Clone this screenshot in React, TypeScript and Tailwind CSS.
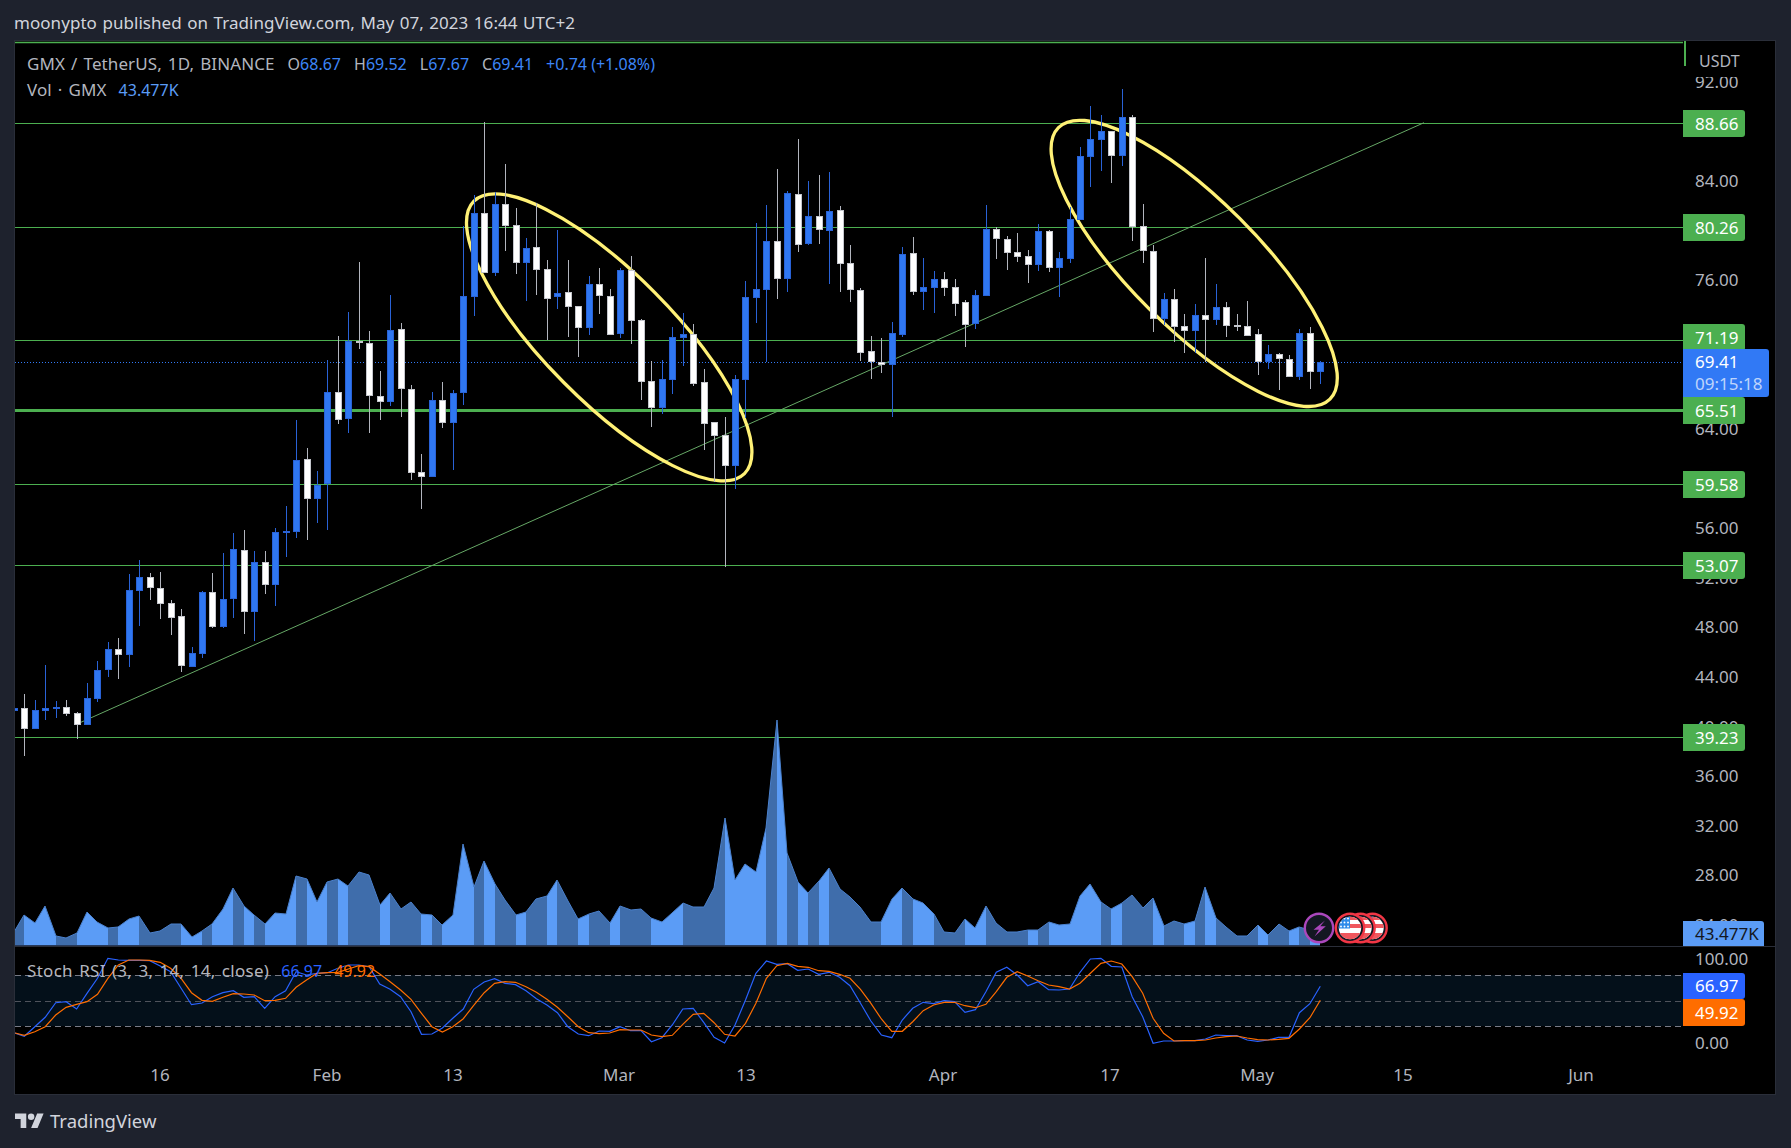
const BLUE = '#2f77f2';
const GREEN = '#4caf50';

// [blue?, bodyTop, bodyBottom, wickTop, wickBottom], y in page pixels, first candle is index -1
const candles: number[][] = [
  [1, 708, 711, 708, 711], [0, 708, 729, 694, 756], [1, 710, 729, 700, 729], [1, 708, 711, 665, 720], [1, 707, 708, 701, 718],
  [0, 707, 714, 700, 716], [0, 713, 725, 712, 739], [1, 698, 725, 683, 725], [1, 670, 699, 661, 702], [1, 649, 670, 642, 677],
  [0, 649, 655, 638, 679], [1, 590, 655, 574, 667], [1, 577, 591, 560, 626], [0, 577, 588, 573, 600], [0, 588, 604, 572, 619],
  [0, 603, 618, 600, 635], [0, 616, 666, 609, 672], [1, 653, 667, 647, 667], [1, 592, 654, 591, 658], [0, 592, 627, 573, 628],
  [1, 599, 627, 553, 628], [1, 549, 599, 533, 618], [0, 550, 612, 530, 634], [1, 562, 612, 551, 641], [0, 562, 585, 551, 594],
  [1, 532, 585, 528, 606], [1, 531, 532, 506, 557], [1, 460, 532, 420, 538], [0, 459, 499, 448, 540], [1, 485, 499, 471, 523],
  [1, 392, 484, 360, 530], [0, 392, 420, 336, 424], [1, 341, 419, 312, 433], [0, 341, 343, 262, 349], [0, 343, 396, 331, 433],
  [0, 396, 402, 371, 420], [1, 330, 402, 295, 406], [0, 329, 389, 323, 417], [0, 389, 473, 385, 480], [0, 472, 477, 454, 509],
  [1, 400, 477, 392, 477], [0, 400, 423, 382, 428], [1, 393, 423, 390, 470], [1, 296, 393, 226, 405], [1, 213, 297, 195, 316],
  [0, 213, 273, 122, 273], [1, 204, 273, 192, 276], [0, 204, 226, 164, 251], [0, 225, 263, 208, 274], [1, 248, 263, 238, 301],
  [0, 247, 270, 203, 295], [0, 269, 299, 260, 340], [1, 293, 297, 230, 309], [0, 292, 307, 260, 337], [0, 306, 328, 306, 357],
  [1, 284, 328, 276, 335], [0, 284, 296, 268, 314], [0, 296, 335, 289, 335], [1, 270, 334, 268, 338], [0, 270, 321, 256, 344],
  [0, 320, 382, 319, 400], [0, 381, 408, 361, 427], [1, 379, 408, 360, 414], [1, 337, 380, 327, 394], [1, 334, 338, 313, 366],
  [0, 334, 384, 324, 386], [0, 382, 424, 369, 450], [0, 422, 436, 422, 482], [0, 435, 466, 417, 567], [1, 379, 466, 375, 489],
  [1, 297, 380, 281, 418], [1, 289, 298, 223, 323], [1, 241, 290, 205, 362], [0, 241, 279, 169, 299], [1, 193, 279, 191, 292],
  [0, 194, 245, 139, 252], [1, 216, 244, 181, 245], [0, 216, 230, 175, 244], [1, 211, 231, 172, 284], [0, 210, 264, 206, 292],
  [0, 263, 290, 245, 302], [0, 290, 353, 288, 361], [0, 351, 362, 336, 379], [0, 362, 365, 338, 373], [1, 333, 365, 322, 417],
  [1, 254, 335, 247, 337], [0, 253, 292, 237, 295], [1, 287, 292, 258, 310], [1, 279, 288, 271, 313], [0, 279, 288, 272, 296],
  [0, 287, 304, 279, 316], [0, 302, 325, 300, 347], [1, 295, 324, 290, 329], [1, 229, 296, 205, 296], [0, 229, 239, 227, 259],
  [0, 239, 253, 236, 270], [0, 252, 257, 233, 262], [0, 256, 265, 250, 283], [1, 231, 265, 224, 271], [0, 231, 268, 230, 272],
  [1, 258, 268, 252, 297], [1, 219, 259, 207, 263], [1, 156, 220, 147, 220], [1, 139, 157, 106, 187], [1, 131, 140, 115, 171],
  [0, 131, 156, 131, 183], [1, 117, 156, 89, 166], [0, 117, 227, 115, 241], [0, 226, 251, 204, 263], [0, 251, 319, 245, 332],
  [1, 299, 319, 293, 325], [0, 299, 327, 289, 342], [0, 326, 331, 314, 353], [1, 315, 331, 304, 353], [0, 315, 320, 258, 362],
  [1, 307, 320, 284, 325], [0, 307, 326, 302, 337], [0, 325, 327, 314, 331], [0, 326, 336, 301, 336], [0, 334, 362, 329, 375],
  [1, 354, 362, 345, 369], [0, 354, 359, 353, 390], [0, 359, 377, 355, 377], [1, 333, 377, 329, 380], [0, 333, 372, 327, 389],
  [1, 362, 372, 361, 384],
];

// top edge of the volume area per candle, starts at index -1 as well
const volume = [
  932, 915, 923, 906, 936, 938, 933, 912, 922, 928, 927, 919, 916, 933, 931, 924, 924, 937, 931, 924,
  909, 888, 906, 915, 924, 913, 914, 876, 879, 902, 882, 879, 886, 872, 875, 905, 893, 909, 902, 914,
  915, 925, 915, 844, 887, 861, 884, 900, 915, 912, 899, 896, 880, 901, 919, 914, 911, 923, 906, 910,
  909, 918, 922, 913, 903, 907, 907, 888, 818, 880, 864, 872, 828, 720, 853, 882, 893, 881, 868, 889,
  897, 907, 922, 922, 899, 888, 899, 903, 914, 932, 933, 919, 928, 906, 923, 932, 932, 930, 930, 922,
  925, 924, 896, 884, 902, 909, 903, 895, 908, 898, 926, 921, 924, 921, 887, 918, 927, 936, 936, 925,
  935, 924, 931, 927, 930, 942,
];

// stoch rsi in thirds of a pixel below y=900, index 0 onward
const rsiK = [
  409, 380, 352, 308, 305, 327, 280, 235, 175, 180, 181, 181, 182, 198, 215, 265, 314, 309, 290, 278,
  272, 292, 290, 325, 290, 272, 215, 225, 220, 218, 205, 195, 195, 200, 252, 268, 290, 335, 403, 402,
  384, 355, 327, 268, 246, 236, 250, 254, 272, 296, 315, 338, 380, 402,
  407, 393, 394, 380, 392, 392, 425, 413, 375, 327, 325, 367, 412, 429, 375, 300, 220, 183, 193, 191,
  211, 207, 223, 217, 232, 257, 310, 363, 405, 413, 360, 325, 307, 311, 302, 305, 337, 329, 275, 217,
  202, 225, 257, 245, 269, 270, 267, 217, 177, 175, 199, 201, 290, 350, 430, 423, 423, 422, 422, 417,
  405, 407, 407, 420, 424, 420, 412, 412, 338, 311, 259,
];
const rsiD = [
  406, 395, 380, 345, 322, 313, 305, 283, 235, 195, 180, 180, 181, 187, 205, 235, 278, 301, 304, 292,
  281, 282, 285, 302, 301, 295, 262, 240, 220, 218, 217, 207, 197, 200, 222, 245, 270, 298, 340, 380,
  396, 380, 356, 316, 278, 250, 245, 247, 260, 277, 298, 322, 350, 380,
  398, 401, 399, 389, 390, 390, 405, 410, 406, 373, 343, 340, 368, 403, 408, 370, 310, 235, 197, 190,
  199, 202, 212, 214, 223, 235, 268, 310, 357, 394, 394, 365, 332, 315, 307, 307, 317, 323, 313, 275,
  232, 215, 228, 242, 255, 260, 267, 250, 220, 190, 183, 192, 230, 280, 355, 400, 423, 422, 422, 420,
  414, 410, 408, 414, 419, 420, 418, 415, 387, 353, 301,
];

// y is the line, top is where the badge sits (71.19 gets pushed up by the last price label)
const levels = [
  { label: '88.66', y: 123, top: 110 }, { label: '80.26', y: 227, top: 214 }, { label: '71.19', y: 340, top: 324 },
  { label: '65.51', y: 410, top: 397, thick: true }, { label: '59.58', y: 484, top: 471 }, { label: '53.07', y: 565, top: 552 },
  { label: '39.23', y: 737, top: 724 },
];
const priceTicks = [92, 88, 84, 76, 72, 64, 56, 52, 48, 44, 40, 36, 32, 28, 24];
const timeTicks = [
  { label: '16', x: 160 }, { label: 'Feb', x: 327 }, { label: '13', x: 453 }, { label: 'Mar', x: 619 }, { label: '13', x: 746 },
  { label: 'Apr', x: 943 }, { label: '17', x: 1110 }, { label: 'May', x: 1257 }, { label: '15', x: 1403 }, { label: 'Jun', x: 1581 },
];

const xAt = (i: number) => 24.3 + 10.452 * i;
const rsiPoints = (vals: number[]) => vals.map((v, i) => `${xAt(i).toFixed(1)},${(900 + v / 3).toFixed(1)}`).join(' ');

function FlagBadge({ cx, id }: { cx: number; id: string }) {
  const cy = 928;
  return (
    <g>
      <clipPath id={id}><circle cx={cx} cy={cy} r={11.2} /></clipPath>
      <circle cx={cx} cy={cy} r={14.2} fill="#131722" stroke="#f23645" strokeWidth={2.4} />
      <g clipPath={`url(#${id})`}>
        <rect x={cx - 12} y={cy - 12} width={24} height={24} fill="#fff" />
        <rect x={cx - 12} y={cy - 12} width={24} height={4} fill="#f0575d" />
        <rect x={cx - 12} y={cy - 4} width={24} height={4} fill="#f0575d" />
        <rect x={cx - 12} y={cy + 5} width={24} height={7} fill="#f0575d" />
        <rect x={cx - 12} y={cy - 12} width={12} height={12.5} fill="#2f8bea" />
        {[-9.5, -5.5, -1.5].map((dy) => [-9, -5.5, -2].map((dx) => (
          <circle key={`${dx}${dy}`} cx={cx + dx} cy={cy + dy} r={0.95} fill="#fff" />
        )))}
      </g>
    </g>
  );
}

function MainPane() {
  return (
    <svg className="block" width={1668} height={905} viewBox="15 41 1668 905">
      <line x1={15} x2={1683} y1={42.5} y2={42.5} stroke={GREEN} strokeWidth={1.4} />
      {levels.map((l) => (
        <line key={l.y} x1={15} x2={1683} y1={l.y + 0.5} y2={l.y + 0.5} stroke={GREEN} strokeWidth={l.thick ? 3 : 1} />
      ))}
      <line x1={15} x2={1681} y1={362.5} y2={362.5} stroke="#3179f5" strokeWidth={1} strokeDasharray="1 2" />
      <line x1={80} y1={722.7} x2={1424} y2={122.7} stroke="#66a866" strokeWidth={1} />

      <ellipse cx={609.2} cy={337.4} rx={192} ry={64} transform="rotate(45.2 609.2 337.4)" fill="none" stroke="#fff176" strokeWidth={3.3} />
      <ellipse cx={1194.2} cy={263.4} rx={192} ry={64} transform="rotate(45 1194.2 263.4)" fill="none" stroke="#fff176" strokeWidth={3.3} />

      {volume.map((y, n) => {
        if (n === 0) return null;
        const x1 = Math.round(xAt(n - 2));
        const x2 = Math.round(xAt(n - 1));
        const blue = candles[n][0] === 1;
        return (
          <polygon
            key={n}
            points={`${x1},945 ${x1},${volume[n - 1]} ${x2},${y} ${x2},945`}
            fill={blue ? '#5b9cf6' : '#3f6dab'}
          />
        );
      })}
      <polyline
        points={volume.map((y, n) => `${Math.round(xAt(n - 1))},${y}`).join(' ')}
        fill="none"
        stroke="#4a80cc"
        strokeWidth={1}
      />
      <rect x={15} y={945} width={1305} height={1} fill="#26395a" />

      {candles.map(([blue, top, bottom, wickTop, wickBottom], n) => {
        const cx = Math.round(xAt(n - 1));
        return (
          <g key={n}>
            <rect x={cx} y={wickTop} width={1} height={wickBottom - wickTop} fill={blue ? '#2962d6' : '#b2b5be'} />
            <rect
              x={cx - 2.5}
              y={top + 0.5}
              width={6}
              height={Math.max(bottom - top - 1, 1)}
              fill={blue ? BLUE : '#ffffff'}
              stroke={blue ? '#2962d6' : '#c4c6cc'}
              strokeWidth={1}
            />
          </g>
        );
      })}

      <circle cx={1319} cy={928} r={14.2} fill="#131722" stroke="#ab47bc" strokeWidth={2.4} />
      <polygon points="1325,920.5 1313.5,929.8 1319,929.8 1314.5,936.5 1325.8,926.3 1320.3,926.3" fill="#ab47bc" />
      <FlagBadge cx={1372.5} id="flag3" />
      <FlagBadge cx={1360.5} id="flag2" />
      <FlagBadge cx={1350} id="flag1" />
    </svg>
  );
}

function RsiPane() {
  return (
    <svg className="block" width={1668} height={115} viewBox="15 947 1668 115">
      <rect x={15} y={975} width={1668} height={51} fill="#04101a" />
      <line x1={15} x2={1683} y1={975.5} y2={975.5} stroke="#787b86" strokeDasharray="6 4" />
      <line x1={15} x2={1683} y1={1001.5} y2={1001.5} stroke="#4f535c" strokeDasharray="6 4" />
      <line x1={15} x2={1683} y1={1026.5} y2={1026.5} stroke="#787b86" strokeDasharray="6 4" />
      <polyline points={`15,1033 ${rsiPoints(rsiK)}`} fill="none" stroke="#2962ff" strokeWidth={1.2} />
      <polyline points={`15,1033 ${rsiPoints(rsiD)}`} fill="none" stroke="#ff6d00" strokeWidth={1.2} />
    </svg>
  );
}

function PriceScale() {
  return (
    <div className="relative w-[92px] h-[905px] text-[17px] text-[#b2b5be] overflow-hidden">
      {priceTicks.map((p) => (
        <span key={p} className="absolute left-[12px] -translate-y-1/2 leading-none" style={{ top: 180 + (84 - p) * 12.4 - 41 }}>
          {p.toFixed(2)}
        </span>
      ))}
      <div className="absolute top-0 inset-x-0 h-[36px] bg-black pl-[16px] pt-[10px] text-[16px] leading-[20px]">USDT</div>
      <div className="absolute top-0 left-[0.5px] w-[2px] h-[25px] bg-[#4caf50]" />
      {levels.map((l) => (
        <div
          key={l.label}
          className="absolute left-0 w-[62px] h-[27px] pl-[12px] rounded-r-[3px] bg-[#4caf50] text-white leading-[27px]"
          style={{ top: l.top - 41 }}
        >
          {l.label}
        </div>
      ))}
      <div className="absolute left-0 top-[308px] w-[86px] h-[48px] pl-[12px] pt-[2px] rounded-r-[3px] bg-[#3179f5] text-white leading-[22px]">
        <div>69.41</div>
        <div className="text-white/70">09:15:18</div>
      </div>
      <div className="absolute left-0 top-[880px] w-[81px] h-[25px] pl-[12px] rounded-tr-[3px] bg-[#5b9cf6] text-[#131722] leading-[26px]">
        43.477K
      </div>
    </div>
  );
}

function RsiScale() {
  return (
    <div className="relative w-[92px] h-[115px] text-[17px] text-[#b2b5be]">
      <span className="absolute left-[12px] top-[2px] leading-[20px]">100.00</span>
      <div className="absolute left-0 top-[26px] w-[62px] h-[26px] pl-[12px] rounded-r-[3px] bg-[#2962ff] text-white leading-[26px]">66.97</div>
      <div className="absolute left-0 top-[52px] w-[62px] h-[27px] pl-[12px] rounded-r-[3px] bg-[#ff6d00] text-white leading-[27px]">49.92</div>
      <span className="absolute left-[12px] top-[86px] leading-[20px]">0.00</span>
    </div>
  );
}

export default function App() {
  return (
    <div className="w-[1791px] h-[1148px] flex flex-col bg-[#1e222d] font-['Noto_Sans',sans-serif] overflow-hidden">
      <header className="h-[40px] px-[14px] pt-[5px] flex items-center text-[17px] tracking-[0.05px] [word-spacing:1px] text-[#d1d4dc]">
        moonypto published on TradingView.com, May 07, 2023 16:44 UTC+2
      </header>

      <div className="ml-[14px] w-[1762px] h-[1055px] border border-[#2a2e39] bg-black flex flex-col">
        <div className="flex h-[905px]">
          <div className="relative w-[1668px]">
            <MainPane />
            <div className="absolute left-[12px] top-[10px] text-[17px] leading-[26px] text-[#b2b5be]">
              <div className="flex">
                <span className="tracking-[0.1px] [word-spacing:1.5px]">GMX / TetherUS, 1D, BINANCE</span>
                <div className="flex text-[16px]">
                  <span className="ml-[13px]">O<span className="text-[#3d86f7]">68.67</span></span>
                  <span className="ml-[13px]">H<span className="text-[#3d86f7]">69.52</span></span>
                  <span className="ml-[13px]">L<span className="text-[#3d86f7]">67.67</span></span>
                  <span className="ml-[13px]">C<span className="text-[#3d86f7]">69.41</span></span>
                  <span className="ml-[13px] text-[#3d86f7]">+0.74 (+1.08%)</span>
                </div>
              </div>
              <div className="flex">
                <span className="tracking-[0.1px] [word-spacing:1.5px]">Vol · GMX</span>
                <span className="ml-[12px] text-[16px] text-[#5b9cf6]">43.477K</span>
              </div>
            </div>
          </div>
          <PriceScale />
        </div>

        <div className="h-px bg-[#2a2e39]" />

        <div className="flex h-[115px]">
          <div className="relative w-[1668px]">
            <RsiPane />
            <div className="absolute left-[12px] top-[11px] flex text-[17px] leading-[26px] text-[#b2b5be]">
              <span className="tracking-[0.3px] [word-spacing:1.5px]">Stoch RSI (3, 3, 14, 14, close)</span>
              <span className="ml-[12px] text-[16px] text-[#2962ff]">66.97</span>
              <span className="ml-[12px] text-[16px] text-[#ff6d00]">49.92</span>
            </div>
          </div>
          <RsiScale />
        </div>

        <div className="relative flex-1 text-[17px] text-[#b2b5be]">
          {timeTicks.map((t) => (
            <span key={t.x} className="absolute top-[2px] -translate-x-1/2 leading-[22px]" style={{ left: t.x - 15 }}>
              {t.label}
            </span>
          ))}
        </div>
      </div>

      <footer className="flex-1 ml-[15px] flex items-center gap-[6px] text-[#d1d4dc]">
        <svg width={29} height={23} viewBox="0 0 36 28" fill="currentColor">
          <path d="M14 22H7V11H0V4h14v18zM28 22h-8l7.5-18h8L28 22z" />
          <circle cx={20} cy={8} r={4} />
        </svg>
        <span className="text-[18.5px] leading-none">TradingView</span>
      </footer>
    </div>
  );
}
